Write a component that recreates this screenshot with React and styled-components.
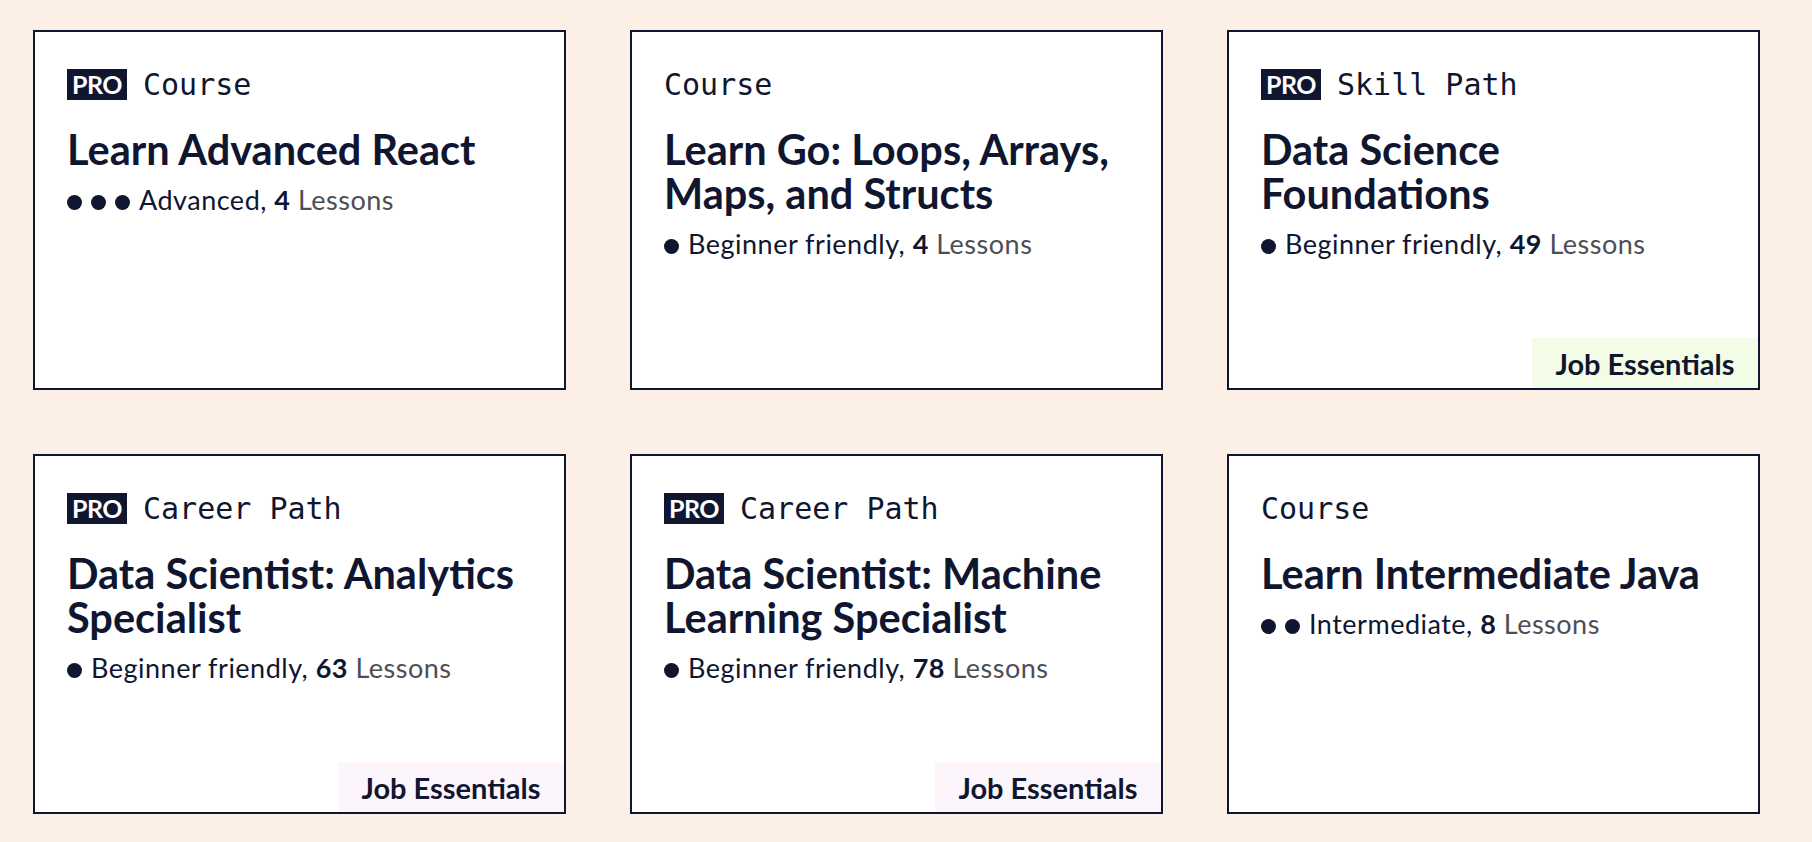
import React from 'react';
import styled, { createGlobalStyle } from 'styled-components';

const GlobalStyle = createGlobalStyle`
  html, body {
    margin: 0;
    padding: 0;
    background: #fcefe6;
  }
  body {
    font-family: Lato, "Liberation Sans", sans-serif;
    color: #10162f;
  }
`;

const Grid = styled.div`
  display: grid;
  grid-template-columns: repeat(3, 533px);
  column-gap: 64px;
  row-gap: 64px;
  padding: 30px 0 30px 33px;
`;

const Card = styled.div`
  position: relative;
  box-sizing: border-box;
  height: 360px;
  padding: 32px;
  background: #fff;
  border: 2px solid #10162f;
`;

const Header = styled.div`
  display: flex;
  align-items: center;
  gap: 16px;
  height: 40px;
`;

const ProBadge = styled.span`
  display: inline-flex;
  align-items: center;
  justify-content: center;
  width: 60px;
  height: 31px;
  background: #10162f;
  color: #fff;
  font-family: Lato, "Liberation Sans", sans-serif;
  font-weight: 700;
  font-size: 25px;
  letter-spacing: -0.5px;
`;

const Kind = styled.span`
  font-family: "DejaVu Sans Mono", "Liberation Mono", monospace;
  font-size: 30px;
  color: #10162f;
`;

const Title = styled.h2`
  margin: 23px 0 0;
  max-width: 456px;
  font-family: Lato, "Liberation Sans", sans-serif;
  font-weight: 700;
  font-size: 41.5px;
  line-height: 44px;
  color: #10162f;
`;

const Meta = styled.div`
  margin-top: 13px;
  font-size: 27px;
  letter-spacing: 0.5px;
  line-height: 32px;
  color: #10162f;
`;

const Dot = styled.span`
  display: inline-block;
  width: 15px;
  height: 15px;
  margin-right: 9px;
  border-radius: 50%;
  background: #10162f;
`;

const Count = styled.b`
  font-weight: 700;
`;

const Lessons = styled.span`
  color: #4e4e55;
`;

const Essentials = styled.div`
  position: absolute;
  right: 0;
  bottom: 0;
  width: 226px;
  height: 50px;
  display: flex;
  align-items: center;
  justify-content: center;
  background: ${({ tone }) => (tone === 'green' ? '#f3fce6' : '#fcf5fc')};
  font-weight: 700;
  font-size: 29px;
  color: #10162f;
`;

const courses = [
  { pro: true, kind: 'Course', title: 'Learn Advanced React', dots: 3, level: 'Advanced', lessons: 4 },
  { pro: false, kind: 'Course', title: 'Learn Go: Loops, Arrays, Maps, and Structs', dots: 1, level: 'Beginner friendly', lessons: 4 },
  { pro: true, kind: 'Skill Path', title: 'Data Science Foundations', dots: 1, level: 'Beginner friendly', lessons: 49, essentials: 'green' },
  { pro: true, kind: 'Career Path', title: 'Data Scientist: Analytics Specialist', dots: 1, level: 'Beginner friendly', lessons: 63, essentials: 'pink' },
  { pro: true, kind: 'Career Path', title: 'Data Scientist: Machine Learning Specialist', dots: 1, level: 'Beginner friendly', lessons: 78, essentials: 'pink' },
  { pro: false, kind: 'Course', title: 'Learn Intermediate Java', dots: 2, level: 'Intermediate', lessons: 8 },
];

const CourseCard = ({ course }) => (
  <Card>
    <Header>
      {course.pro && <ProBadge>PRO</ProBadge>}
      <Kind>{course.kind}</Kind>
    </Header>
    <Title>{course.title}</Title>
    <Meta>
      {Array.from({ length: course.dots }).map((_, i) => (
        <Dot key={i} />
      ))}
      {course.level}, <Count>{course.lessons}</Count> <Lessons>Lessons</Lessons>
    </Meta>
    {course.essentials && <Essentials tone={course.essentials}>Job Essentials</Essentials>}
  </Card>
);

const App = () => (
  <>
    <GlobalStyle />
    <Grid>
      {courses.map((course, index) => (
        <CourseCard key={index} course={course} />
      ))}
    </Grid>
  </>
);

export default App;
